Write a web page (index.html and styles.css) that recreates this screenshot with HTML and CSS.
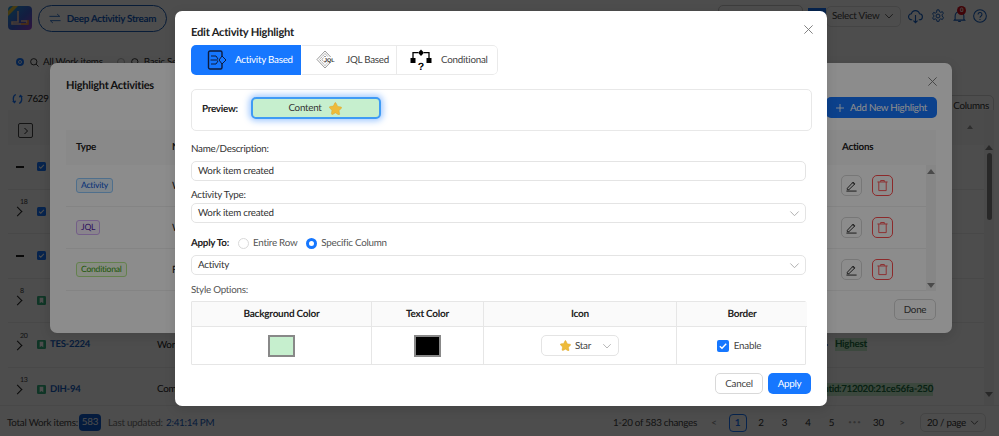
FILE: index.html
```html
<!DOCTYPE html>
<html lang="en">
<head>
<meta charset="utf-8">
<title>Edit Activity Highlight</title>
<link rel="stylesheet" href="styles.css">
</head>
<body>
<svg class="defs" width="0" height="0" aria-hidden="true">
  <defs>
    <symbol id="chev" viewBox="0 0 12 12"><path d="M1.500 3.800 6 8.400l4.500-4.600" fill="none" stroke="currentColor" stroke-width="1"/></symbol>
    <symbol id="x" viewBox="0 0 12 12"><path d="M1.500 1.500l9 9M10.500 1.500l-9 9" fill="none" stroke="currentColor" stroke-width="1"/></symbol>
    <symbol id="star" viewBox="0 0 24 24"><path d="M12 1.800c.6 0 1.100.3 1.400.9l2.600 5.500 6 .8c1.300.2 1.800 1.800.9 2.700l-4.400 4.200 1.100 6c.2 1.300-1.200 2.300-2.300 1.700L12 20l-5.300 2.900c-1.100.6-2.500-.4-2.300-1.700l1.100-6-4.400-4.200c-.9-.9-.4-2.500.9-2.700l6-.8 2.600-5.500c.3-.6.8-.9 1.400-.9z" fill="#eebb3a" stroke="#d9a021" stroke-width=".8"/></symbol>
    <symbol id="edit" viewBox="0 0 14 14"><path d="M2.500 10 8.800 3.300l1.900 1.900L4.200 11.500H2.500zM8 4l2 2" fill="none" stroke="currentColor" stroke-width="1"/><path d="M1.500 13h11" stroke="currentColor" stroke-width="1"/></symbol>
    <symbol id="trash" viewBox="0 0 14 14"><path d="M1.500 3.200h11M5 3V1.600h4V3M3 3.200v9.300h8V3.200" fill="none" stroke="currentColor" stroke-width="1"/></symbol>
    <symbol id="bookmark" viewBox="0 0 10 10"><rect width="10" height="10" rx="1.500" fill="#36b37e"/><path d="M3 2h4v6L5 6.600 3 8z" fill="#fff"/></symbol>
    <symbol id="check" viewBox="0 0 12 12"><rect width="12" height="12" rx="2" fill="currentColor"/><path d="M2.800 6.200 5 8.300l4.200-4.600" fill="none" stroke="#fff" stroke-width="1.400"/></symbol>
  </defs>
</svg>

<div class="page">
  <header class="top-bar">
    <svg class="logo" width="24" height="24" viewBox="0 0 24 24">
      <defs><linearGradient id="lg" x1="0" y1="0" x2="1" y2="1"><stop offset="0" stop-color="#1fa3e0"/><stop offset=".55" stop-color="#3f63d8"/><stop offset="1" stop-color="#a03fd0"/></linearGradient></defs>
      <rect width="24" height="24" rx="4" fill="url(#lg)"/>
      <path d="M0 5 5 0h5L0 10z" fill="#e8c53a"/>
      <path d="M10 5v11H4v2h15v-3h-6" fill="none" stroke="#f0c9b0" stroke-width="1.600"/>
      <path d="M13 18h7v-4" fill="none" stroke="#f08a3a" stroke-width="1.600"/>
    </svg>
    <button class="stream-btn">
      <svg width="12" height="11" viewBox="0 0 14 12"><path d="M.5 3.500h12L9.500 .8M13.500 8.500h-12l3 2.700" fill="none" stroke="currentColor" stroke-width="1"/></svg>
      Deep Activitiy Stream
    </button>
    <div class="top-right">
      <span class="peek-btn"></span>
      <span class="peek-blue"></span>
      <div class="select-view">Select View <svg width="10" height="10"><use href="#chev"/></svg></div>
      <svg class="top-icon ti-cloud" width="15" height="15" viewBox="0 0 16 16"><path d="M4.500 11.500H4a3.200 3.200 0 0 1-.4-6.400 4.500 4.500 0 0 1 8.700 0 3.200 3.200 0 0 1-.3 6.400h-.500M8 6.500v8M5.800 12.400 8 14.600l2.200-2.200" fill="none" stroke="currentColor" stroke-width="1.200"/></svg>
      <svg class="top-icon ti-gear" width="14" height="14" viewBox="0 0 16 16"><path d="M6.800 1h2.400l.4 2 1.500.8 1.900-.8 1.200 2-1.500 1.300v1.500L14.200 10 13 12l-1.900-.7-1.500.8-.4 2H6.800l-.4-2-1.500-.8L3 12l-1.200-2 1.500-1.200V7.300L1.800 5.900 3 3.900l1.900.8 1.500-.8z" fill="none" stroke="currentColor" stroke-width="1.100"/><circle cx="8" cy="8" r="2.200" fill="none" stroke="currentColor" stroke-width="1.100"/></svg>
      <span class="bell">
        <svg class="top-icon" width="13" height="14" viewBox="0 0 14 16"><path d="M2 11.500V8a5 5 0 0 1 10 0v3.500l1 1.200H1zM5.500 14.200h3" fill="none" stroke="currentColor" stroke-width="1.200"/></svg>
        <span class="bell-badge">0</span>
      </span>
      <svg class="top-icon" width="14" height="14" viewBox="0 0 15 15"><circle cx="7.500" cy="7.500" r="6.800" fill="none" stroke="currentColor" stroke-width="1.100"/><path d="M5.400 5.800a2.100 2.100 0 1 1 3.300 1.700c-.8.500-1.200.9-1.200 1.800M7.500 10.700v1.200" fill="none" stroke="currentColor" stroke-width="1.100"/></svg>
    </div>
  </header>

  <div class="search-row">
    <span class="radio-dot on"></span>
    <svg class="s-icon" width="9" height="9" viewBox="0 0 10 10"><circle cx="4.200" cy="4.200" r="3.500" fill="none" stroke="#222" stroke-width="1"/><path d="M6.800 6.800 9.500 9.500" stroke="#222"/></svg>
    <span class="search-label">All Work items</span>
    <span class="radio-dot"></span>
    <svg class="s-icon" width="9" height="9" viewBox="0 0 10 10"><circle cx="4.200" cy="4.200" r="3.500" fill="none" stroke="#222" stroke-width="1"/><path d="M6.800 6.800 9.500 9.500" stroke="#222"/></svg>
    <span class="search-label">Basic Search</span>
  </div>

  <div class="tool-row">
    <span class="sync">
      <svg width="11" height="12" viewBox="0 0 13 13"><path d="M4.500 1.200C2.500 2 1.500 3.800 1.500 6.500c0 1.600.5 2.900 1.500 3.800M.8 9 3 10.800l1.300-2.300M8.500 11.800c2-.8 3-2.600 3-5.300 0-1.600-.5-2.900-1.500-3.800M12.200 4 10 2.200 8.700 4.500" fill="none" stroke="#1677ff" stroke-width="1.500"/></svg>
      7629 changes
    </span>
    <span class="columns-btn">Columns</span>
  </div>

  <div class="table">
    <div class="t-head">
      <span class="expand-box"><svg width="8" height="8" viewBox="0 0 8 8"><path d="M2.500 1 5.500 4l-3 3" fill="none" stroke="#222"/></svg></span>
      <i class="sort-up"></i>
    </div>
    <div class="t-rows">
      <div class="t-row"><span class="dash"></span><svg class="cb" width="9" height="9"><use href="#check"/></svg></div>
      <div class="t-row"><span class="exp">18</span><svg class="cb" width="9" height="9"><use href="#check"/></svg></div>
      <div class="t-row"><span class="dash"></span><svg class="cb" width="9" height="9"><use href="#check"/></svg></div>
      <div class="t-row"><span class="exp">8</span><svg class="bm" width="9" height="9"><use href="#bookmark"/></svg></div>
      <div class="t-row"><span class="exp">20</span><svg class="bm" width="9" height="9"><use href="#bookmark"/></svg><a class="key">TES-2224</a><span class="sum">Work</span><span class="val val-pri"><i class="dot"></i><mark>Highest</mark></span></div>
      <div class="t-row"><span class="exp">13</span><svg class="bm" width="9" height="9"><use href="#bookmark"/></svg><a class="key">DIH-94</a><span class="sum">Comm</span><span class="val val-id"><mark>ntid:712020:21ce56fa-250</mark></span></div>
    </div>
    <div class="t-scroll">
      <i class="up"></i><i class="thumb"></i><i class="down"></i>
    </div>
  </div>

  <footer class="foot">
    <span class="total">Total Work items:</span><span class="total-badge">583</span>
    <span class="updated">Last updated:</span><span class="time">2:41:14 PM</span>
    <div class="foot-right">
      <span class="range">1-20 of 583 changes</span>
      <nav class="pager">
        <span class="pg arrow">&lt;</span><span class="pg cur">1</span><span class="pg">2</span><span class="pg">3</span><span class="pg">4</span><span class="pg">5</span><span class="pg dots">•••</span><span class="pg">30</span><span class="pg arrow">&gt;</span>
      </nav>
      <div class="size">20 / page <svg width="9" height="9"><use href="#chev"/></svg></div>
    </div>
  </footer>
</div>

<div class="mask"></div>

<section class="dlg list-dlg">
  <h2 class="list-title">Highlight Activities</h2>
  <svg class="list-close" width="11" height="11"><use href="#x"/></svg>
  <div class="list-tools">
    <button class="add-btn"><svg width="8" height="8" viewBox="0 0 9 9"><path d="M4.500 0v9M0 4.500h9" stroke="currentColor"/></svg> Add New Highlight</button>
  </div>
  <div class="list-head"><span class="lh-type">Type</span><span class="lh-name">Na</span><span class="lh-actions">Actions</span></div>
  <div class="list-body">
    <div class="list-rows">
      <div class="list-row"><span class="tag-cell"><span class="tag tag-blue">Activity</span></span><span class="lr-name">Work</span><span class="btns"><span class="sq"><svg width="13" height="13"><use href="#edit"/></svg></span><span class="sq red"><svg width="13" height="13"><use href="#trash"/></svg></span></span></div>
      <div class="list-row"><span class="tag-cell"><span class="tag tag-purple">JQL</span></span><span class="lr-name">Work</span><span class="btns"><span class="sq"><svg width="13" height="13"><use href="#edit"/></svg></span><span class="sq red"><svg width="13" height="13"><use href="#trash"/></svg></span></span></div>
      <div class="list-row"><span class="tag-cell"><span class="tag tag-green">Conditional</span></span><span class="lr-name">Field</span><span class="btns"><span class="sq"><svg width="13" height="13"><use href="#edit"/></svg></span><span class="sq red"><svg width="13" height="13"><use href="#trash"/></svg></span></span></div>
    </div>
    <div class="list-scroll"><i class="up"></i><i class="down"></i></div>
  </div>
  <div class="list-foot"><button class="done-btn">Done</button></div>
</section>

<div class="mask"></div>

<section class="dlg edit-dlg">
  <h2 class="edit-title">Edit Activity Highlight</h2>
  <svg class="edit-close" width="11" height="11"><use href="#x"/></svg>

  <div class="tabs">
    <div class="tab on">
      <svg width="20" height="20" viewBox="0 0 20 20"><rect x="1.500" y="1" width="13.500" height="18" rx="1.500" fill="none" stroke="#0d1b3d" stroke-width="1.400"/><path d="M4 6h5l2 3M3.500 10h7.500M4 14h5l2-3" fill="none" stroke="#0d1b3d" stroke-width="1"/><path d="M15 6l4 4-4 4-3-4z" fill="#1677ff" stroke="#0d1b3d" stroke-width="1"/></svg>
      <span>Activity Based</span>
    </div>
    <div class="tab">
      <svg width="20" height="20" viewBox="0 0 20 20"><g fill="none" stroke="#9a9a9a" stroke-width="1"><path d="M9 1 1 9.500 9 18l8-8.500z"/><path d="M9 3.500 3.500 9.500 9 15.500l5.500-6z" stroke-dasharray="1.500 .7"/><path d="M9 6 6 9.500 9 13l3-3.500z"/></g><rect x="7.500" y="7" width="12.500" height="5.500" fill="#fff"/><text x="8" y="12" class="jql-text">JQL</text></svg>
      <span>JQL Based</span>
    </div>
    <div class="tab">
      <svg class="flow-icon" width="22" height="24" viewBox="0 0 22 24"><path d="M11 0.500 14 3.700 11 6.900 8 3.700z" fill="#000"/><path d="M8 3.700H3V9M14 3.700h5V9" fill="none" stroke="#000" stroke-width="1.300"/><rect x="0.500" y="9" width="5" height="5" fill="#000"/><rect x="16.500" y="9" width="5" height="5" fill="#000"/><text x="11" y="20.500" class="q-text">?</text></svg>
      <span>Conditional</span>
    </div>
  </div>

  <div class="preview">
    <strong class="preview-label">Preview:</strong>
    <div class="chip">Content <svg width="13" height="13"><use href="#star"/></svg></div>
  </div>

  <label class="f-label f-name">Name/Description:</label>
  <div class="field">Work item created</div>

  <label class="f-label f-tight">Activity Type:</label>
  <div class="field field-sel">Work item created <svg width="11" height="11"><use href="#chev"/></svg></div>

  <div class="apply-row">
    <strong>Apply To:</strong>
    <span class="radio"></span><span class="radio-text">Entire Row</span>
    <span class="radio sel"></span><span class="radio-text">Specific Column</span>
  </div>
  <div class="field field-sel">Activity <svg width="11" height="11"><use href="#chev"/></svg></div>

  <label class="f-label">Style Options:</label>
  <div class="style-table">
    <div class="st-h">Background Color</div>
    <div class="st-h">Text Color</div>
    <div class="st-h">Icon</div>
    <div class="st-h">Border</div>
    <div class="st-c"><span class="swatch green"></span></div>
    <div class="st-c"><span class="swatch black"></span></div>
    <div class="st-c"><div class="icon-sel"><svg width="11" height="11"><use href="#star"/></svg><span>Star</span><svg class="icon-chev" width="10" height="10"><use href="#chev"/></svg></div></div>
    <div class="st-c enable"><svg class="en-check" width="12" height="12"><use href="#check"/></svg><span>Enable</span></div>
  </div>

  <div class="edit-foot">
    <button class="btn-cancel">Cancel</button>
    <button class="btn-apply">Apply</button>
  </div>
</section>
</body>
</html>
```

FILE: styles.css
```css
* { box-sizing: border-box; }
html, body { margin: 0; height: 100%; }
body {
  width: 999px; height: 436px; overflow: hidden; position: relative;
  background: #fff; color: #222;
  font-family: Lato, "Open Sans", "Liberation Sans", sans-serif;
  font-size: 9.800px;
  letter-spacing: -.25px;
  text-rendering: geometricPrecision;
}
.defs { position: absolute; }
button { font-family: inherit; cursor: pointer; text-rendering: geometricPrecision; letter-spacing: inherit; }

/* page behind the dialogs */
.page { width: 999px; height: 436px; display: flex; flex-direction: column; }
.top-bar { height: 37px; display: flex; align-items: flex-start; padding: 5px 0 0 8px; gap: 6px; flex: none; }
.logo { margin-top: 1px; }
.stream-btn {
  width: 129px; height: 27px; border: 1px solid #1d5fb8; border-radius: 14px; background: #fff;
  color: #1560c4; font-size: 9.800px; font-weight: 700; display: flex; align-items: center; justify-content: center; gap: 6px; padding: 0;
}
.top-right { margin-left: auto; display: flex; align-items: center; height: 22px; padding-right: 12px; }
.peek-btn { width: 85px; height: 22px; border: 1px solid #ccc; border-radius: 5px; margin-right: 5px; }
.peek-blue { width: 18px; height: 16px; background: #1677ff; }
.select-view {
  width: 75px; height: 21px; border: 1px solid #e4e4e4; border-radius: 5px; margin-right: 7px; padding-left: 5px;
  color: #444; display: flex; align-items: center; gap: 5px; white-space: nowrap;
}
.top-icon { color: #1560c4; display: block; }
.ti-cloud { margin-right: 8px; }
.ti-gear { margin-right: 8px; }
.bell { position: relative; margin-right: 7px; }
.bell-badge {
  position: absolute; top: -3px; left: 4px; width: 9px; height: 9px; border-radius: 50%;
  background: #d8101c; color: #fff; font-size: 6px; line-height: 9px; text-align: center; font-weight: 700;
}

.search-row { height: 42px; padding: 8px 0 0 16px; display: flex; align-items: center; flex: none; }
.radio-dot { width: 8px; height: 8px; border-radius: 50%; border: 1px solid #bbb; background: #fff; margin-right: 6px; }
.radio-dot.on { border: 2px solid #1677ff; background: #1677ff; box-shadow: inset 0 0 0 1px #fff; }
.s-icon { margin-right: 4px; }
.search-label { margin-right: 14px; color: #333; }
.tool-row { height: 31px; display: flex; align-items: flex-start; padding: 0 5px 0 12px; justify-content: space-between; flex: none; }
.sync { display: flex; align-items: center; gap: 4px; color: #222; margin-top: 14px; }
.columns-btn { width: 50px; height: 21px; margin-top: 16px; border: 1px solid #d9d9d9; border-radius: 5px; color: #333; display: flex; align-items: center; justify-content: flex-end; padding-right: 4px; }

.table { position: relative; margin: 0 5px 0 8px; height: 295px; flex: none; overflow: hidden; }
.t-head { height: 35px; padding: 13px 0 0 10px; background: #fafafa; position: relative; }
.expand-box { display: flex; width: 15px; height: 15px; border: 1px solid #444; border-radius: 2px; align-items: center; justify-content: center; }
.sort-up { position: absolute; right: 21px; top: 15px; width: 0; height: 0; border: 3px solid transparent; border-top: 0; border-bottom: 4px solid #999; }
.t-row { height: 44.500px; display: flex; align-items: center; border-bottom: 1px solid #eee; padding-left: 8px; position: relative; }
.dash { width: 8px; height: 1.500px; background: #222; margin-right: 13px; }
.exp { width: 21px; font-size: 7px; color: #444; position: relative; padding-left: 4px; margin-top: -8px; height: 18px; flex: none; }
.exp::before { content: ""; position: absolute; left: -2px; top: 10px; width: 6px; height: 6px; border-top: 1px solid #222; border-right: 1px solid #222; transform: rotate(45deg); }
.cb { color: #1677ff; flex: none; }
.bm { flex: none; }
.key { margin-left: 4px; color: #1560c4; font-weight: 700; font-size: 9.500px; width: 107px; flex: none; }
.sum { color: #222; white-space: nowrap; }
.val { position: absolute; display: flex; align-items: center; gap: 7px; font-weight: 700; color: #1f6f43; white-space: nowrap; }
.val-pri { right: 127px; }
.val-id { right: 61px; letter-spacing: -.35px; }
mark { background: #c6efce; color: inherit; padding: 0 0 1px 0; }
.dot { width: 2px; height: 2px; background: #1560c4; border-radius: 50%; }
.t-scroll { position: absolute; right: 0; top: 0; bottom: 0; width: 10px; display: flex; flex-direction: column; align-items: center; background: #f7f7f7; padding-top: 35px; }
.t-scroll .thumb { width: 5px; height: 67px; border-radius: 3px; background: #888; margin: 3px 0 auto; }
.up { width: 0; height: 0; border: 4px solid transparent; border-top: 0; border-bottom: 5px solid #888; }
.down { width: 0; height: 0; border: 4px solid transparent; border-bottom: 0; border-top: 5px solid #888; }
.t-scroll .down { margin-bottom: 8px; }

.foot { height: 31px; border-top: 1px solid #eee; display: flex; align-items: center; padding: 3px 13px 0 7px; flex: none; background: #fff; }
.total { color: #444; width: 69px; white-space: nowrap; }
.total-badge { margin-left: 3px; width: 22px; height: 17px; background: #0f5bd0; color: #fff; border-radius: 4px; text-align: center; line-height: 17px; }
.updated { margin-left: 7px; color: #777; width: 53px; white-space: nowrap; }
.time { margin-left: 5px; color: #1560c4; }
.foot-right { margin-left: auto; display: flex; align-items: center; }
.range { color: #444; margin-right: 8px; }
.pager { display: flex; align-items: center; gap: 5.500px; margin-right: 9px; color: #333; }
.pg { min-width: 18px; height: 18px; line-height: 18px; text-align: center; }
.pg.arrow { color: #888; }
.pg.cur { border: 1px solid #1677ff; border-radius: 4px; color: #1677ff; line-height: 16px; font-weight: 700; }
.pg.dots { color: #aaa; font-size: 6px; letter-spacing: 1px; }
.size { width: 66px; height: 19px; border: 1px solid #e4e4e4; border-radius: 5px; display: flex; align-items: center; justify-content: center; gap: 4px; color: #333; }

/* stacked modal masks */
.mask { position: absolute; inset: 0; background: rgba(0,0,0,.45); }
.dlg { position: absolute; background: #fff; border-radius: 7px; box-shadow: 0 3px 12px rgba(0,0,0,.12); }

/* Highlight Activities dialog */
.list-dlg { left: 50px; top: 63px; width: 902px; height: 270px; padding: 0 16px; display: flex; flex-direction: column; }
.list-title { margin: 13px 0 0; height: 16px; line-height: 19px; font-size: 11px; font-weight: 700; color: #222; }
.list-close { position: absolute; right: 14px; top: 13px; color: #777; }
.list-tools { display: flex; justify-content: flex-end; margin: 5px -1px 0 0; height: 33px; flex: none; }
.add-btn { width: 111px; height: 21px; background: #1677ff; color: #fff; border: 0; border-radius: 5px; font-size: 9.800px; padding: 0; display: flex; align-items: center; justify-content: center; gap: 6px; }
.list-head { height: 35px; padding: 0 0 2px 10px; background: #fafafa; display: flex; align-items: center; font-weight: 700; flex: none; }
.lh-type { width: 96px; }
.lh-name { width: 670px; }
.lh-actions { width: 60px; }
.list-body { display: flex; height: 126px; flex: none; }
.list-rows { flex: 1; }
.list-row { height: 42px; border-bottom: 1px solid #f0f0f0; display: flex; align-items: center; padding-left: 10px; }
.tag-cell { width: 96px; flex: none; display: flex; }
.tag { border: 1px solid; border-radius: 3px; font-size: 8.600px; height: 15px; line-height: 13px; padding: 0 4px; }
.tag-blue { background: #e6f4ff; border-color: #91caff; color: #0958d9; }
.tag-purple { background: #f9f0ff; border-color: #d3adf7; color: #531dab; }
.tag-green { background: #f6ffed; border-color: #b7eb8f; color: #389e0d; }
.lr-name { flex: 1; color: #222; font-size: 10px; }
.btns { display: flex; gap: 10px; width: 85px; }
.sq { width: 21px; height: 21px; border: 1px solid #d9d9d9; border-radius: 5px; display: flex; align-items: center; justify-content: center; color: #222; }
.sq.red { border-color: #ff4d4f; color: #ff4d4f; }
.list-scroll { width: 10px; background: #f5f5f5; display: flex; flex-direction: column; align-items: center; justify-content: space-between; padding: 4px 0 3px; }
.list-foot { display: flex; justify-content: flex-end; padding-top: 8px; }
.done-btn { width: 42px; height: 21px; background: #fff; border: 1px solid #d9d9d9; border-radius: 5px; font-size: 9.800px; color: #444; padding: 0; }

/* Edit dialog */
.edit-dlg { left: 175px; top: 11px; width: 652px; height: 395px; padding: 0 15px 0 16px; color: #333; }
.edit-title { margin: 13px 0 0; height: 16px; line-height: 18px; font-size: 11.200px; font-weight: 700; color: #222; }
.edit-close { position: absolute; right: 13px; top: 13px; color: #777; }
.tabs { display: flex; width: 307px; margin-top: 5px; height: 30px; border-radius: 5px; overflow: hidden; }
.tab { display: flex; align-items: center; color: #444; border: 1px solid #eaeaea; border-width: 1px 0; }
.tab:nth-child(1) { width: 110px; padding-left: 16px; gap: 8px; background: #1677ff; color: #fff; border: 0; margin-right: 1px; }
.tab:nth-child(2) { width: 95px; padding-left: 14px; gap: 10px; border-right: 1px solid #eaeaea; }
.tab:nth-child(3) { width: 101px; padding-left: 13px; gap: 9px; border-right: 1px solid #eaeaea; border-radius: 0 5px 5px 0; }
.flow-icon { margin-top: 2px; }
.jql-text { font-size: 5.500px; font-weight: 700; fill: #333; font-family: "Liberation Sans", sans-serif; letter-spacing: 0; }
.q-text { font-size: 10.500px; font-weight: 700; text-anchor: middle; font-family: "Liberation Sans", sans-serif; letter-spacing: 0; }
.preview { display: flex; align-items: center; width: 621px; height: 42px; margin-top: 14px; border: 1px solid #e8e8e8; border-radius: 5px; padding: 0 0 4px 10px; }
.preview-label { font-weight: 700; color: #222; width: 49px; padding-top: 1px; }
.chip {
  width: 130px; height: 22px; background: #c6efce; border: 2px solid #3f9bf5; border-radius: 5px;
  box-shadow: 0 0 6px 2px rgba(22,119,255,.4); color: #333;
  display: flex; align-items: center; justify-content: center; gap: 7px; padding-right: 2px;
}
.f-label { display: block; height: 13px; line-height: 15px; color: #333; margin-top: 11px; }
.f-name { margin-top: 11px; margin-bottom: 0; }
.f-tight { margin-top: 7px; margin-bottom: -4px; }
.field { width: 615px; height: 20px; border: 1px solid #e4e4e4; border-radius: 5px; line-height: 18px; padding: 0 6px; margin-top: 6px; color: #333; display: flex; align-items: center; justify-content: space-between; }
.field-sel svg { color: #aaa; margin-right: -1px; }
.apply-row { display: flex; align-items: center; height: 14px; margin-top: 12px; padding-top: 2px; color: #555; white-space: nowrap; }
.apply-row strong { color: #222; font-weight: 700; margin-right: 7px; width: 40px; flex: none; }
.radio { width: 11px; height: 11px; border-radius: 50%; border: 1px solid #d9d9d9; margin-right: 4px; flex: none; }
.radio.sel { border: 3px solid #1677ff; }
.radio-text { margin-right: 9px; }
.apply-row + .field + .f-label { margin-top: 8px; color: #555; }
.style-table { display: grid; grid-template-columns: 180px 112px 193px 130px; width: 615px; height: 64px; margin-top: 5px; border: 1px solid #e6e6e6; border-radius: 1px; grid-template-rows: 25px 1fr; }
.st-h { background: #fafafa; font-weight: 700; color: #222; font-size: 10px; display: flex; align-items: center; justify-content: center; border-right: 1px solid #e6e6e6; border-bottom: 1px solid #e6e6e6; }
.st-c { display: flex; align-items: center; justify-content: center; border-right: 1px solid #e6e6e6; }
.st-h:nth-child(4), .st-c:nth-child(8) { border-right: 0; }
.swatch { width: 27px; height: 22px; border: 2px solid #888; display: block; }
.swatch.green { background: #c6efce; }
.swatch.black { background: #000; }
.icon-sel { width: 78px; height: 21px; border: 1px solid #e4e4e4; border-radius: 5px; display: flex; align-items: center; padding-left: 18px; gap: 4px; color: #444; position: relative; }
.icon-chev { color: #aaa; position: absolute; right: 6px; top: 5px; }
.enable { gap: 5px; color: #444; padding-right: 6px; }
.en-check { color: #1677ff; }
.edit-foot { display: flex; justify-content: flex-end; gap: 5px; margin-top: 8px; padding-right: 1px; }
.btn-cancel { width: 48px; height: 21px; background: #fff; border: 1px solid #d9d9d9; border-radius: 5px; font-size: 9.800px; color: #444; padding: 0; }
.btn-apply { width: 43px; height: 21px; background: #1677ff; border: 0; border-radius: 5px; color: #fff; font-size: 9.800px; padding: 0; }
```
